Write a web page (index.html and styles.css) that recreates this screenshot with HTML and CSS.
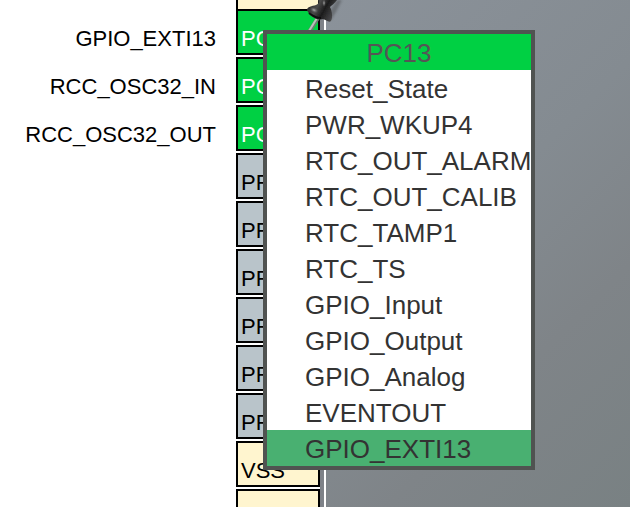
FILE: index.html
```html
<!DOCTYPE html>
<html lang="en">
<head>
<meta charset="utf-8">
<title>Pinout view</title>
<link rel="stylesheet" href="styles.css">
</head>
<body>
<main class="pinout">
  <ul class="pins">
    <li class="row row-cut"><span class="signal"></span><span class="pin power"></span></li>
    <li class="row"><span class="signal">GPIO_EXTI13</span><span class="pin active">PC13</span></li>
    <li class="row"><span class="signal">RCC_OSC32_IN</span><span class="pin active">PC14</span></li>
    <li class="row"><span class="signal">RCC_OSC32_OUT</span><span class="pin active">PC15</span></li>
    <li class="row"><span class="signal"></span><span class="pin">PF0</span></li>
    <li class="row"><span class="signal"></span><span class="pin">PF1</span></li>
    <li class="row"><span class="signal"></span><span class="pin">PF2</span></li>
    <li class="row"><span class="signal"></span><span class="pin">PF3</span></li>
    <li class="row"><span class="signal"></span><span class="pin">PF4</span></li>
    <li class="row"><span class="signal"></span><span class="pin">PF5</span></li>
    <li class="row"><span class="signal"></span><span class="pin power">VSS</span></li>
    <li class="row"><span class="signal"></span><span class="pin power"></span></li>
  </ul>
  <div class="chip"></div>
  <svg class="pushpin" width="50" height="40" viewBox="0 0 50 40" aria-hidden="true">
    <defs>
      <linearGradient id="body" x1="0" y1="0" x2="1" y2="0.4">
        <stop offset="0" stop-color="#1c1c1c"/>
        <stop offset="0.4" stop-color="#4a4a4a"/>
        <stop offset="0.65" stop-color="#1c1c1c"/>
        <stop offset="1" stop-color="#48484a"/>
      </linearGradient>
      <radialGradient id="shine">
        <stop offset="0" stop-color="#b0b0b0"/>
        <stop offset="1" stop-color="#444" stop-opacity="0"/>
      </radialGradient>
      <filter id="soft" x="-30%" y="-30%" width="160%" height="160%"><feGaussianBlur stdDeviation="1"/></filter>
      <filter id="edge"><feGaussianBlur stdDeviation="0.5"/></filter>
    </defs>
    <path d="M32 16L38 6L42 0L47 0L41 12L36 20Z" fill="#333" opacity="0.35" filter="url(#soft)"/>
    <path d="M23 18L14 32" stroke="#6f7a72" stroke-width="4"/>
    <path d="M22 18L14 31" stroke="#b9c0ba" stroke-width="2"/>
    <g filter="url(#edge)">
      <path d="M23 0H42C40 3 37 5 35 7C37 11 38 17 36 21C34 23 31 20 28 19C22 21 14 16 12 10C12 7 17 6 21 5C24 4 24 2 23 0Z" fill="url(#body)"/>
      <ellipse cx="19" cy="10" rx="5" ry="3" fill="url(#shine)" transform="rotate(25 19 10)"/>
      <ellipse cx="29" cy="3" rx="2" ry="4" fill="url(#shine)"/>
      <path d="M14 13Q20 18 26 18" fill="none" stroke="#111" stroke-width="2"/>
    </g>
  </svg>
  <section class="menu" aria-label="PC13 functions">
    <h1 class="menu-title">PC13</h1>
    <button class="item">Reset_State</button>
    <button class="item">PWR_WKUP4</button>
    <button class="item">RTC_OUT_ALARM</button>
    <button class="item">RTC_OUT_CALIB</button>
    <button class="item">RTC_TAMP1</button>
    <button class="item">RTC_TS</button>
    <button class="item">GPIO_Input</button>
    <button class="item">GPIO_Output</button>
    <button class="item">GPIO_Analog</button>
    <button class="item">EVENTOUT</button>
    <button class="item selected">GPIO_EXTI13</button>
  </section>
</main>
</body>
</html>
```
FILE: styles.css
```css
* {
  box-sizing: border-box;
}

body {
  margin: 0;
  background: #fff;
  font-family: "Liberation Sans", Arial, sans-serif;
}

.pinout {
  position: relative;
  display: flex;
  height: 100vh;
  overflow: hidden;
}

.pins {
  display: flex;
  flex: none;
  flex-direction: column;
  gap: 2px;
  margin: 0;
  padding: 0;
  list-style: none;
  font-size: 22px;
  line-height: 24px;
}

.row {
  display: grid;
  flex: none;
  grid-template-columns: 216px 84px;
  column-gap: 20px;
  height: 46px;
}

.row-cut {
  height: 7px;
}

.signal {
  padding-top: 18px;
  text-align: right;
  white-space: nowrap;
}

.pin {
  padding: 16px 0 0 3px;
  border: 2px solid #000;
  background: #b9c4ca;
  overflow: hidden;
}

.row-cut .pin {
  padding: 0;
  border-top: 0;
}

.pin.active {
  background: #00d043;
  color: #fff;
}

.pin.power {
  background: #fff5cf;
}

.chip {
  position: relative;
  flex: 1;
  border-left: 4px solid #7e8288;
  background: linear-gradient(135deg, #8b929a 0%, #848b91 45%, #7f8488 70%, #798183 100%);
}

.chip::before {
  content: "";
  display: block;
  width: 2px;
  height: 100%;
  background: #fff;
}

.pushpin {
  position: absolute;
  top: 0;
  left: 295px;
}

.menu {
  position: absolute;
  top: 30px;
  left: 263px;
  display: flex;
  flex-direction: column;
  width: 272px;
  border: 4px solid #505351;
  background: #fff;
}

.menu-title,
.item {
  height: 36px;
  margin: 0;
  padding: 2px 0 0;
  font: 26px/34px "Liberation Sans", Arial, sans-serif;
  white-space: nowrap;
}

.menu-title {
  background: #00d043;
  color: #555;
  text-align: center;
}

.item {
  padding-left: 38px;
  border: 0;
  background: none;
  color: #333;
  text-align: left;
}

.item.selected {
  background: #49b071;
}
```
